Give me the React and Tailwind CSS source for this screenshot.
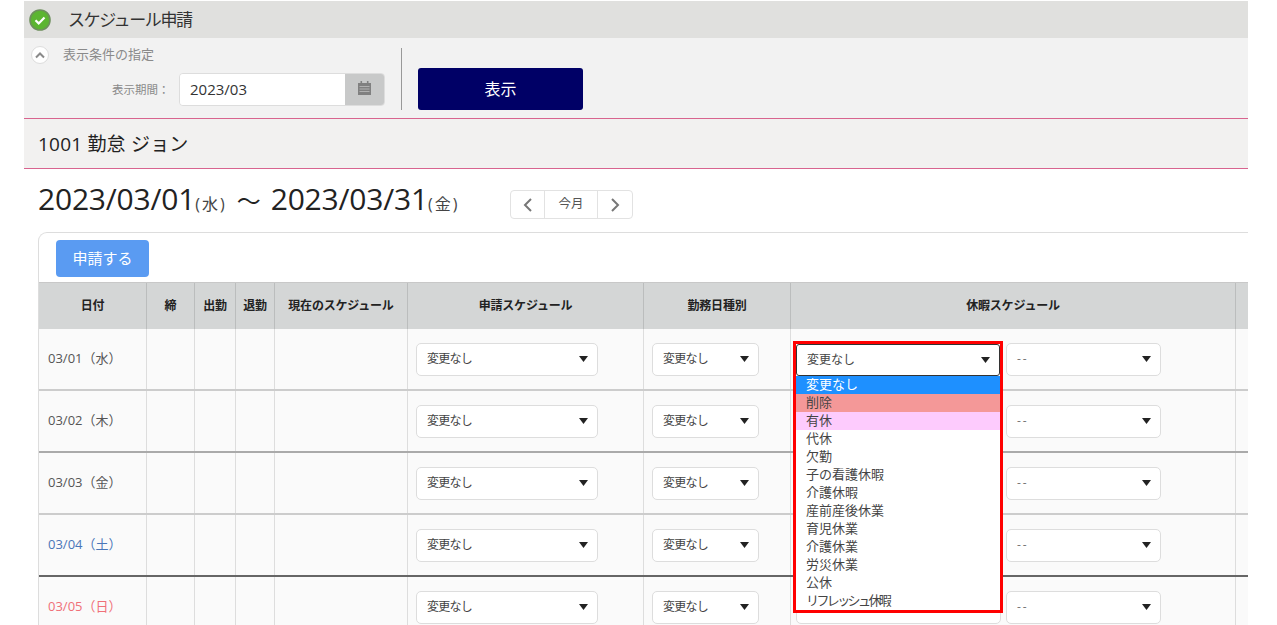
import React from 'react';

const font = { fontFamily: '"Open Sans", "Noto Sans CJK JP", sans-serif' };

const rows = [
  { date: '03/01（水）', color: 'text-[#555555]', border: 'border-b-[#cccccc]' },
  { date: '03/02（木）', color: 'text-[#555555]', border: 'border-b-[#aaaaaa]' },
  { date: '03/03（金）', color: 'text-[#555555]', border: 'border-b-[#cccccc]' },
  { date: '03/04（土）', color: 'text-[#4a76b8]', border: 'border-b-[#666666]' },
  { date: '03/05（日）', color: 'text-[#f07078]', border: 'border-b-[#cccccc]' },
];

const options = [
  '変更なし', '削除', '有休', '代休', '欠勤', '子の看護休暇', '介護休暇',
  '産前産後休業', '育児休業', '介護休業', '労災休業', '公休', 'リフレッシュ休暇',
];

const gridCols = 'grid-cols-[108px_48px_41px_39px_133px_236px_147px_445px_13px]';

const Caret = () => (
  <svg width="9" height="6" viewBox="0 0 9 6" className="shrink-0">
    <path d="M0 0h9L4.5 6z" fill="#222222" />
  </svg>
);

const Select = ({ label, className, labelClass }) => (
  <div className={`h-[33px] flex items-center justify-between pl-[10px] pr-[9px] bg-white border border-[#dddddd] rounded-[5px] text-[12px] ${className}`}>
    <span className={labelClass}>{label}</span>
    <Caret />
  </div>
);

const HeadCell = ({ children }) => (
  <div className="flex items-center justify-center border-r border-[#bbbdbd] text-[12px] font-bold tracking-[-0.2px] text-[#222222] last:border-r-0">
    {children}
  </div>
);

const Row = ({ row }) => {
  const label = 'text-[#444444] tracking-[-0.75px]';
  return (
    <div className={`grid ${gridCols} h-[62px] bg-[#fafafa] border-b-2 ${row.border}`}>
      <div className={`flex items-center pl-[9px] pb-[1px] border-r border-[#dddddd] text-[13px] ${row.color}`}>{row.date}</div>
      <div className="border-r border-[#dddddd]" />
      <div className="border-r border-[#dddddd]" />
      <div className="border-r border-[#dddddd]" />
      <div className="border-r border-[#dddddd]" />
      <div className="flex items-center pl-[8px] border-r border-[#dddddd]">
        <Select label="変更なし" className="w-[182px]" labelClass={label} />
      </div>
      <div className="flex items-center pl-[8px] border-r border-[#dddddd]">
        <Select label="変更なし" className="w-[107px]" labelClass={label} />
      </div>
      <div className="flex items-center gap-[5px] pl-[5px] border-r border-[#dddddd]">
        <Select label="変更なし" className="w-[205px]" labelClass={label} />
        <Select label="--" className="w-[155px]" labelClass="text-[#777777] tracking-[2px]" />
      </div>
      <div />
    </div>
  );
};

const App = () => {
  return (
    <div className="w-[1277px] h-[625px] overflow-hidden bg-white pl-[24px] pr-[29px] text-[#222222]" style={font}>
      {/* title */}
      <div className="h-[37px] mt-px flex items-center bg-[#e0e0de]">
        <svg width="22" height="22" viewBox="0 0 22 22" className="ml-[5px]">
          <circle cx="11" cy="11" r="10" fill="#5cb531" stroke="#6d8f5c" strokeWidth="1.6" />
          <path d="M6.5 11.2l3.2 3.2 5.8-6" fill="none" stroke="#ffffff" strokeWidth="2.2" />
        </svg>
        <span className="ml-[17px] text-[17px] tracking-[-1.4px] text-[#333333]">スケジュール申請</span>
      </div>

      {/* filter */}
      <div className="h-[81px] flex bg-[#f2f2f2] border-b border-b-[#d8648f]">
        <div className="w-[377px] pl-[7px]">
          <div className="flex items-center h-[20px] mt-[7px]">
            <div className="w-[18px] h-[18px] flex items-center justify-center rounded-full bg-white border border-[#dddddd]">
              <svg width="10" height="7" viewBox="0 0 10 7">
                <path d="M1 5.5l4-4 4 4" fill="none" stroke="#8a8a8a" strokeWidth="2" />
              </svg>
            </div>
            <span className="ml-[14px] text-[13px] text-[#8a8a8a]">表示条件の指定</span>
          </div>
          <div className="flex items-center mt-[8px] pl-[81px]">
            <span className="w-[67px] text-[11.5px] text-[#8a8a8a]">表示期間：</span>
            <div className="flex w-[206px] h-[33px] rounded-[4px] border border-[#dddddd] overflow-hidden">
              <div className="flex-1 flex items-center pl-[10px] bg-white text-[15px] text-[#333333]">2023/03</div>
              <div className="w-[39px] flex items-center justify-center bg-[#c8c9c9] pb-[4px]">
                <svg width="13" height="14" viewBox="0 0 13 14">
                  <path d="M2.5 0h1.6v2h4.8V0h1.6v2H13v12H0V2h2.5z" fill="#808080" />
                  <path d="M1.5 5.5h10M1.5 8h10M1.5 10.5h10" stroke="#b0b0b0" strokeWidth="1" />
                </svg>
              </div>
            </div>
          </div>
        </div>
        <div className="w-px h-[62px] mt-[10px] bg-[#999999]" />
        <div className="ml-[16px] mt-[30px] w-[165px] h-[42px] flex items-center justify-center rounded-[3px] bg-[#000066] text-[16px] text-white">
          表示
        </div>
      </div>

      {/* employee */}
      <div className="h-[50px] flex items-center pl-[14px] pt-[1px] bg-[#f2f1f0] border-b border-b-[#d8648f] text-[19px] tracking-[0.2px] text-[#222222]">
        1001 勤怠 ジョン
      </div>

      {/* period */}
      <div className="h-[63px] flex items-center pl-[14px]">
        <div className="flex items-baseline w-[472px] mt-[1px] whitespace-nowrap">
          <span className="text-[30px] leading-none tracking-[-0.2px]">2023/03/01</span>
          <span className="text-[16px] tracking-[2px] text-[#444444]">(水)</span>
          <span className="text-[24px] mx-[10px]">～</span>
          <span className="text-[30px] leading-none tracking-[-0.2px]">2023/03/31</span>
          <span className="text-[16px] tracking-[2px] text-[#444444]">(金)</span>
        </div>
        <div className="flex h-[29px] mt-[8px] bg-white border border-[#e2e2e2] rounded-[4px]">
          <div className="w-[33px] flex items-center justify-center">
            <svg width="10" height="16" viewBox="0 0 10 16"><path d="M8 2L2 8l6 6" fill="none" stroke="#777777" strokeWidth="2" /></svg>
          </div>
          <div className="w-[54px] flex items-center justify-center border-x border-[#e2e2e2] text-[12.5px] text-[#555555]">今月</div>
          <div className="w-[34px] flex items-center justify-center">
            <svg width="10" height="16" viewBox="0 0 10 16"><path d="M2 2l6 6-6 6" fill="none" stroke="#777777" strokeWidth="2" /></svg>
          </div>
        </div>
      </div>

      {/* table card */}
      <div className="relative ml-[14px] border-l border-t border-[#dddddd] rounded-tl-[9px]">
        <div className="h-[49px] pl-[17px] pt-[7px]">
          <div className="w-[93px] h-[37px] flex items-center justify-center rounded-[4px] bg-[#5a9bf2] text-[15px] text-white">申請する</div>
        </div>
        <div className={`grid ${gridCols} h-[47px] bg-[#d4d6d6] border-t border-[#c8c8c8]`}>
          <HeadCell>日付</HeadCell>
          <HeadCell>締</HeadCell>
          <HeadCell>出勤</HeadCell>
          <HeadCell>退勤</HeadCell>
          <HeadCell>現在のスケジュール</HeadCell>
          <HeadCell>申請スケジュール</HeadCell>
          <HeadCell>勤務日種別</HeadCell>
          <HeadCell>休暇スケジュール</HeadCell>
          <HeadCell />
        </div>
        {rows.map((row) => <Row key={row.date} row={row} />)}

        {/* open dropdown */}
        <div className="absolute left-[754px] top-[108px] w-[210px] border-[3px] border-[#ff0000] bg-white text-[13px] text-[#444444]">
          <div className="h-[32px] flex items-center justify-between pl-[10px] pr-[9px] bg-white border border-[#333333] rounded-[3px] text-[12px]">
            <span>変更なし</span>
            <Caret />
          </div>
          {options.map((opt, i) => (
            <div
              key={opt}
              className={`h-[18px] leading-[17px] pl-[10px] whitespace-nowrap ${i === 0 ? 'bg-[#1e90ff] text-white' : i === 1 ? 'bg-[#f49898]' : i === 2 ? 'bg-[#fdcbfd]' : 'bg-white'} ${i === 12 ? 'tracking-[-2.6px]' : ''}`}
            >
              {opt}
            </div>
          ))}
        </div>
      </div>
    </div>
  );
};

export default App;
